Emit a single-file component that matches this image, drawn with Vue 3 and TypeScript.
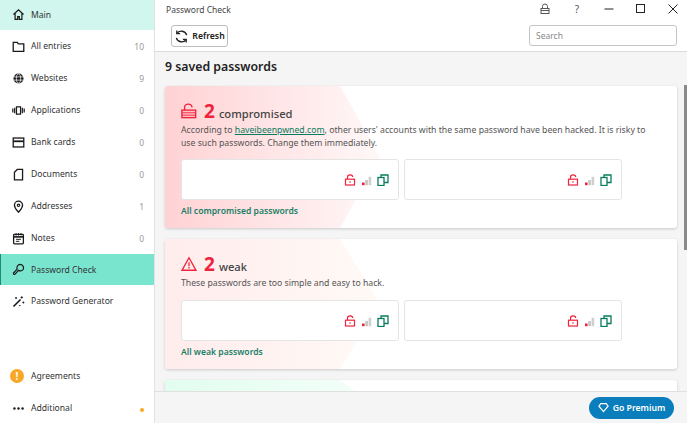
<script setup lang="ts">
interface NavItem { label: string; icon: string; count?: number; cls?: string }
const nav: NavItem[] = [
  { label: 'Main', icon: 'home', cls: 'main' },
  { label: 'All entries', icon: 'folder', count: 10 },
  { label: 'Websites', icon: 'globe', count: 9 },
  { label: 'Applications', icon: 'apps', count: 0 },
  { label: 'Bank cards', icon: 'card', count: 0 },
  { label: 'Documents', icon: 'doc', count: 0 },
  { label: 'Addresses', icon: 'pin', count: 1 },
  { label: 'Notes', icon: 'notes', count: 0 },
  { label: 'Password Check', icon: 'key', cls: 'active' },
  { label: 'Password Generator', icon: 'wand' },
]
interface Card { cls: string; num: number; word: string; link: string }
const cards: Card[] = [
  { cls: 'compromised', num: 2, word: 'compromised', link: 'All compromised passwords' },
  { cls: 'weak', num: 2, word: 'weak', link: 'All weak passwords' },
]
</script>

<template>
  <div class="app">
    <aside class="side">
      <div class="nav-top">
        <div v-for="n in nav" :key="n.label" class="nav" :class="n.cls">
          <svg class="ni" viewBox="0 0 16 16" fill="none" stroke="#1a1a1a" stroke-width="1.500">
            <template v-if="n.icon === 'home'"><path d="M1.800 8 8 2.200 14.200 8M3.800 6.500V14H7v-3.500h2V14h3.200V6.500" /></template>
            <template v-else-if="n.icon === 'folder'"><path d="M1.500 3h5l1.200 1.800h6.800V14h-13z" stroke-width="1.600" /></template>
            <template v-else-if="n.icon === 'globe'"><circle cx="8" cy="8" r="6.200" fill="#1a1a1a" stroke="none" /><ellipse cx="8" cy="8" rx="2.600" ry="5.600" stroke="#fff" stroke-width=".9" /><path d="M2.200 6h11.600M2.200 10h11.600" stroke="#fff" stroke-width=".9" /></template>
            <template v-else-if="n.icon === 'apps'"><rect x="5.500" y="3.500" width="5" height="9" /><path d="M3.300 4.500v7M1 5.500v5M12.700 4.500v7M15 5.500v5" /></template>
            <template v-else-if="n.icon === 'card'"><rect x="1.500" y="2.500" width="13" height="11" stroke-width="1.600" /><path d="M1.500 6.500h13" stroke-width="2.200" /></template>
            <template v-else-if="n.icon === 'doc'"><path d="M6.500 1.800H13V14.500H3V5.300z" stroke-width="1.600" /></template>
            <template v-else-if="n.icon === 'pin'"><path d="M8 15C5.500 12 3 9.800 3 6.500a5 5 0 0 1 10 0C13 9.800 10.500 12 8 15z" stroke-width="1.600" /><circle cx="8" cy="6.500" r="1.500" /></template>
            <template v-else-if="n.icon === 'notes'"><rect x="2" y="3" width="12" height="11.500" rx="1" stroke-width="1.600" /><path d="M2 6h12" stroke-width="2" /><path d="M5 1.300v3M8 1.300v3M11 1.300v3M5 9h6M5 11.500h4" stroke-width="1.200" /></template>
            <template v-else-if="n.icon === 'key'"><path d="M10 1.800a4.200 4.200 0 0 1 4 5.500 4.200 4.200 0 0 1-6 1.800L3.500 14 2 13.800 1.800 12.300 6.300 7.500A4.200 4.200 0 0 1 10 1.800z" /></template>
            <template v-else><path d="M1.800 14.200 10.500 5.500" stroke-width="2" /><path d="M12 1.500v3M10.500 3H13.500M14 8v2.500M12.800 9.200h2.400M5 2.500v2.500M3.800 3.700h2.400M8.500 13h2" stroke-width="1.100" /></template>
          </svg>
          <span class="nl">{{ n.label }}</span>
          <span v-if="n.count !== undefined" class="nc">{{ n.count }}</span>
        </div>
      </div>
      <div class="nav-bottom">
        <div class="nav">
          <span class="warn">!</span>
          <span class="nl">Agreements</span>
        </div>
        <div class="nav">
          <svg class="ni" viewBox="0 0 16 16" fill="#1a1a1a"><circle cx="3" cy="8" r="1.500" /><circle cx="8" cy="8" r="1.500" /><circle cx="13" cy="8" r="1.500" /></svg>
          <span class="nl">Additional</span>
          <span class="dot"></span>
        </div>
      </div>
    </aside>

    <div class="main-col">
      <header class="head">
        <div class="title-row">
          <span class="title">Password Check</span>
          <div class="win">
            <svg class="w" viewBox="0 0 14 14" fill="none" stroke="#555"><path d="M4.500 6V4.500a2.500 2.500 0 0 1 5 0V6" /><rect x="3" y="6.500" width="8" height="5" /><path d="M3 8.500h8" /></svg>
            <span class="w q">?</span>
            <svg class="w" viewBox="0 0 14 14" stroke="#222"><path d="M2.500 7h9" /></svg>
            <svg class="w" viewBox="0 0 14 14" fill="none" stroke="#222"><rect x="2.500" y="2.500" width="8" height="8" /></svg>
            <svg class="w" viewBox="0 0 14 14" stroke="#222"><path d="M2.500 2.500l9 9M11.500 2.500l-9 9" /></svg>
          </div>
        </div>
        <div class="tool-row">
          <button class="refresh">
            <svg viewBox="0 0 16 16" width="15" height="15" fill="none" stroke="#222" stroke-width="1.500"><path d="M13.500 6.500A5.800 5.800 0 0 0 3 5M2.500 9.500A5.800 5.800 0 0 0 13 11" /><path d="M3 1.500V5h3.500M13 14.500V11H9.500" stroke-width="1.400" /></svg>
            Refresh
          </button>
          <div class="search">Search</div>
        </div>
      </header>

      <main class="content">
        <h1 class="count">9 saved passwords</h1>

        <section v-for="c in cards" :key="c.cls" class="card" :class="c.cls">
          <div class="card-in">
            <div class="card-h">
              <svg v-if="c.cls === 'compromised'" class="big" viewBox="0 0 18 18" fill="none" stroke="#f0233c" stroke-width="1.500"><path d="M4 8V5a4.200 3.700 0 0 1 8.400 0" /><rect x="1" y="8" width="15.500" height="8.500" fill="#ffc0c6" /><path d="M1 11h15.500M1 13.700h15.500" stroke-width="1" /></svg>
              <svg v-else class="big" viewBox="0 0 18 18" fill="none" stroke="#f0233c" stroke-width="1.500"><path d="M9 2 1.200 16h15.600z" /><path d="M9 7v4.500M9 12.500v1.700" /></svg>
              <span class="num">{{ c.num }}</span>
              <span class="word">{{ c.word }}</span>
            </div>
            <p v-if="c.cls === 'compromised'" class="desc">According to <a class="hl">haveibeenpwned.com</a>, other users' accounts with the same password have been hacked. It is risky to<br />use such passwords. Change them immediately.</p>
            <p v-else class="desc">These passwords are too simple and easy to hack.</p>
            <div class="tiles">
              <div v-for="t in 2" :key="t" class="tile">
                <svg class="ti" viewBox="0 0 12 12" fill="none" stroke="#f0233c" stroke-width="1.200"><path d="M3.500 5V3a2.600 2.200 0 0 1 5.200 0" /><rect x="1.500" y="5.200" width="9" height="5.800" /><path d="M6 7.300v1.500" /></svg>
                <svg class="ti" viewBox="0 0 12 12"><rect x="1" y="8.500" width="2.600" height="2.700" fill="#f0233c" /><rect x="4.300" y="6" width="2.600" height="5.200" fill="#c4c4c4" /><rect x="7.600" y="2.800" width="2.600" height="8.400" fill="#cfcfcf" /></svg>
                <svg class="ti" viewBox="0 0 12 12" fill="none" stroke="#0a7b5e" stroke-width="1.300"><rect x="1" y="3.500" width="6" height="8" /><path d="M4 3.500V1h7v7.500H7" /></svg>
              </div>
            </div>
            <a class="all">{{ c.link }}</a>
          </div>
        </section>

        <section class="card good"></section>
      </main>

      <footer class="foot">
        <button class="prem">
          <svg viewBox="0 0 12 12" width="11" height="11" fill="none" stroke="#fff" stroke-width="1.300"><path d="M3 1.800h6L11 4.500 6 10.500 1 4.500z" /></svg>
          Go Premium
        </button>
      </footer>
      <div class="scroll"></div>
    </div>
  </div>
</template>

<style>
html, body { margin: 0; padding: 0; overflow: hidden; }
</style>

<style scoped>
.app {
  width: 687px; height: 423px; display: flex; overflow: hidden; background: #fff;
  font-family: "Noto Sans", "Open Sans", sans-serif; color: #222;
}
.side {
  width: 155px; flex: none; box-sizing: border-box; border-right: 1px solid #e2e2e2;
  display: flex; flex-direction: column; justify-content: space-between;
}
.nav {
  height: 32px; display: flex; align-items: center; padding: 0 10px 0 12px; box-sizing: border-box;
  font-size: 8.600px; color: #333; position: relative;
}
.nav.main { height: 30px; background: #d1f6ed; padding-bottom: 1px; }
.nav.active { background: #7ae5cf; border-left: 1px solid #1f8a70; padding-left: 11px; height: 31px; }
.ni { width: 13px; height: 13px; flex: none; margin-right: 6px; }
.nl { flex: 1; white-space: nowrap; }
.nc { color: #9a9a9a; font-size: 8.500px; }
.warn {
  width: 14px; height: 14px; margin: 0 7px 0 -2px; border-radius: 50%; background: #f9a825; color: #fff;
  font-size: 10px; font-weight: 700; display: flex; align-items: center; justify-content: center; flex: none;
}
.nav-bottom { margin-bottom: -1px; }
.dot { width: 4px; height: 4px; border-radius: 50%; background: #f9a825; margin-top: 3px; }

.main-col { flex: 1; min-width: 0; display: flex; flex-direction: column; position: relative; }
.head { height: 52px; box-sizing: border-box; border-bottom: 1px solid #dcdcdc; background: #fff; flex: none; }
.title-row { height: 25px; display: flex; align-items: flex-start; justify-content: space-between; padding-left: 11px; }
.title { font-size: 8.500px; color: #444; margin-top: 4px; }
.win { display: flex; align-items: center; gap: 18px; padding: 2px 7px 0 0; }
.w { width: 14px; height: 14px; display: block; text-align: center; }
.q { font-size: 10px; color: #555; line-height: 14px; }
.tool-row { display: flex; justify-content: space-between; padding: 0 10px 0 16px; align-items: flex-start; }
.refresh {
  height: 22px; width: 57px; padding: 0; display: flex; align-items: center; justify-content: center; gap: 3px; background: #fff;
  border: 1px solid #bdbdbd; border-bottom-width: 1.500px; border-radius: 3px; font: 600 8.700px "Noto Sans", sans-serif; color: #222;
}
.search {
  width: 148px; height: 21px; box-sizing: border-box; border: 1px solid #c4c4c4; border-bottom-width: 1.500px; border-radius: 3px;
  font-size: 8.500px; color: #888; padding: 4px 6px; line-height: 12px;
}

.content { flex: 1; min-height: 0; overflow: hidden; background: #f5f5f5; padding: 0 10px; }
.count { margin: 6px 0 0; font-size: 12.300px; line-height: 18px; font-weight: 600; color: #222; }
.card {
  width: 512px; margin-top: 10px; background: #fff; border-radius: 3px; box-shadow: 0 1px 3px rgba(0,0,0,.18);
  position: relative; overflow: hidden;
}
.card + .card { margin-top: 11px; }
.card::before {
  content: ""; position: absolute; left: 0; top: 0; bottom: 0; width: 215px;
  clip-path: polygon(0 0, 175px 0, 215px 50%, 175px 100%, 0 100%);
}
.compromised::before { background: linear-gradient(90deg, #ffd2d4, #fff8f8); }
.weak::before { background: linear-gradient(90deg, #ffecec, #fffaf6); }
.good { height: 60px; }
.good::before { background: linear-gradient(90deg, #e2fdf0, #f4fff9); }
.card-in { position: relative; padding: 14px 16px 0; }
.compromised { height: 142px; }
.weak { height: 130px; }
.card-h { display: flex; align-items: baseline; height: 24px; }
.big { width: 16px; height: 16px; margin-right: 7px; align-self: flex-start; margin-top: 3px; }
.num { font-size: 19px; font-weight: 700; color: #f0233c; line-height: 22px; margin-right: 4px; }
.word { font-size: 11.200px; font-weight: 500; color: #444; }
.desc { margin: 0; font-size: 8.700px; line-height: 13px; color: #555; white-space: nowrap; }
.hl { color: #0a7b5e; text-decoration: underline; }
.tiles { display: flex; gap: 5px; margin-top: 9px; }
.weak .tiles { margin-top: 10px; }
.tile {
  width: 218px; height: 41px; box-sizing: border-box; background: #fff; border: 1px solid #e4e4e4; border-radius: 3px;
  display: flex; align-items: center; justify-content: flex-end; gap: 4.500px; padding-right: 9px;
}
.ti { width: 12px; height: 12px; }
.all { display: block; margin-top: 5px; font-size: 8.600px; font-weight: 600; color: #1a8068; line-height: 12px; }

.foot {
  height: 32px; flex: none; box-sizing: border-box; background: #f5f5f5; border-top: 1px solid #e0e0e0;
  display: flex; align-items: center; justify-content: flex-end; padding-right: 13px;
}
.prem {
  width: 85px; height: 22px; border: 0; border-radius: 11px; background: #0a7dbd; color: #fff; padding: 0;
  display: flex; align-items: center; justify-content: center; gap: 4px; font: 600 8.700px "Noto Sans", sans-serif;
}
.scroll { position: absolute; right: 0; top: 85px; width: 3px; height: 165px; background: #8a8a8a; }
</style>
